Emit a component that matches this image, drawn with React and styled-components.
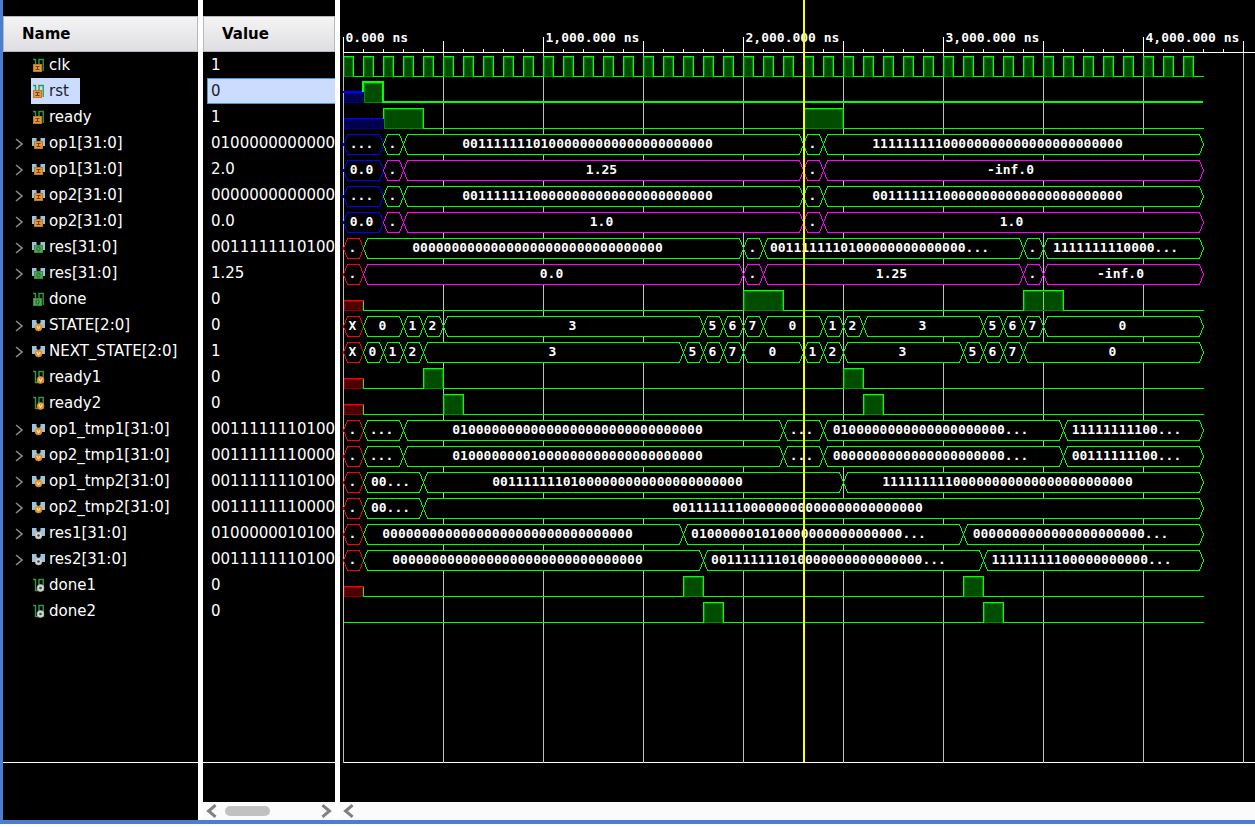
import React from "react";
import styled, { createGlobalStyle, css } from "styled-components";

const ROW = 26;
const UNIT = 20;
const END = 43;
const RULER = 52;
const GREEN = "#00ff00";
const MAGENTA = "#ff00ff";
const BLUE = "#0000ff";
const RED = "#ff0000";

const zeros = (prefix, length) => prefix.padEnd(length, "0");
const ONE_25 = "00111111101";
const ONE = "001111111";
const TWO = "01";
const NEG_INF = "111111111";

const DOT = ".";
const DOTS = "...";

const STATE = [
  ["X", 0, 1, RED], ["0", 1, 3], ["1", 3, 4], ["2", 4, 5], ["3", 5, 18],
  ["5", 18, 19], ["6", 19, 20], ["7", 20, 21], ["0", 21, 24], ["1", 24, 25],
  ["2", 25, 26], ["3", 26, 32], ["5", 32, 33], ["6", 33, 34], ["7", 34, 35],
  ["0", 35, 43],
];
const NEXT_STATE = [
  ["X", 0, 1, RED], ["0", 1, 2], ["1", 2, 3], ["2", 3, 4], ["3", 4, 17],
  ["5", 17, 18], ["6", 18, 19], ["7", 19, 20], ["0", 20, 23], ["1", 23, 24],
  ["2", 24, 25], ["3", 25, 31], ["5", 31, 32], ["6", 32, 33], ["7", 33, 34],
  ["0", 34, 43],
];

// Bus segments are [text, start, end, colour]; times are in units of 100 ns.
const signals = [
  { name: "clk", badge: "in", value: "1", clock: true },
  { name: "rst", badge: "in", value: "0", selected: true, unknown: [1, BLUE], highs: [[1, 2]] },
  { name: "ready", badge: "in", value: "1", unknown: [2, BLUE], highs: [[2, 4], [23, 25]] },
  { name: "op1[31:0]", badge: "in", value: zeros(TWO, 13), bus: [[DOTS, 0, 2, BLUE], [DOT, 2, 3], [zeros(ONE_25, 32), 3, 23], [DOT, 23, 24], [zeros(NEG_INF, 32), 24, 43]] },
  { name: "op1[31:0]", badge: "in", value: "2.0", color: MAGENTA, bus: [["0.0", 0, 2, BLUE], [DOT, 2, 3], ["1.25", 3, 23], [DOT, 23, 24], ["-inf.0", 24, 43]] },
  { name: "op2[31:0]", badge: "in", value: zeros("", 13), bus: [[DOTS, 0, 2, BLUE], [DOT, 2, 3], [zeros(ONE, 32), 3, 23], [DOT, 23, 24], [zeros(ONE, 32), 24, 43]] },
  { name: "op2[31:0]", badge: "in", value: "0.0", color: MAGENTA, bus: [["0.0", 0, 2, BLUE], [DOT, 2, 3], ["1.0", 3, 23], [DOT, 23, 24], ["1.0", 24, 43]] },
  { name: "res[31:0]", badge: "out", value: zeros(ONE_25, 13), bus: [[DOT, 0, 1, RED], [zeros("", 32), 1, 20], [DOT, 20, 21], [zeros(ONE_25, 25) + DOTS, 21, 34], [DOT, 34, 35], [zeros(NEG_INF, 13) + DOTS, 35, 43]] },
  { name: "res[31:0]", badge: "out", value: "1.25", color: MAGENTA, bus: [[DOT, 0, 1, RED], ["0.0", 1, 20], [DOT, 20, 21], ["1.25", 21, 34], [DOT, 34, 35], ["-inf.0", 35, 43]] },
  { name: "done", badge: "out", value: "0", unknown: [1, RED], highs: [[20, 22], [34, 36]] },
  { name: "STATE[2:0]", badge: "var", value: "0", bus: STATE },
  { name: "NEXT_STATE[2:0]", badge: "var", value: "1", bus: NEXT_STATE },
  { name: "ready1", badge: "var", value: "0", unknown: [1, RED], highs: [[4, 5], [25, 26]] },
  { name: "ready2", badge: "var", value: "0", unknown: [1, RED], highs: [[5, 6], [26, 27]] },
  { name: "op1_tmp1[31:0]", badge: "var", value: zeros(ONE_25, 13), bus: [[DOT, 0, 1, RED], [DOTS, 1, 3], [zeros(TWO, 32), 3, 22], [DOTS, 22, 24], [zeros(TWO, 22) + DOTS, 24, 36], [zeros(NEG_INF, 11) + DOTS, 36, 43]] },
  { name: "op2_tmp1[31:0]", badge: "var", value: zeros(ONE, 13), bus: [[DOT, 0, 1, RED], [DOTS, 1, 3], [zeros("01000000001", 32), 3, 22], [DOTS, 22, 24], [zeros("", 22) + DOTS, 24, 36], [zeros(ONE, 11) + DOTS, 36, 43]] },
  { name: "op1_tmp2[31:0]", badge: "var", value: zeros(ONE_25, 13), bus: [[DOT, 0, 1, RED], ["00...", 1, 4], [zeros(ONE_25, 32), 4, 25], [zeros(NEG_INF, 32), 25, 43]] },
  { name: "op2_tmp2[31:0]", badge: "var", value: zeros(ONE, 13), bus: [[DOT, 0, 1, RED], ["00...", 1, 4], [zeros(ONE, 32), 4, 43]] },
  { name: "res1[31:0]", badge: "net", value: zeros("01000000101", 13), bus: [[DOT, 0, 1, RED], [zeros("", 32), 1, 17], [zeros("01000000101", 27) + DOTS, 17, 31], [zeros("", 22) + DOTS, 31, 43]] },
  { name: "res2[31:0]", badge: "net", value: zeros(ONE_25, 13), bus: [[DOT, 0, 1, RED], [zeros("", 32), 1, 18], [zeros(ONE_25, 27) + DOTS, 18, 32], [zeros(NEG_INF, 20) + DOTS, 32, 43]] },
  { name: "done1", badge: "net", value: "0", unknown: [1, RED], highs: [[17, 18], [31, 32]] },
  { name: "done2", badge: "net", value: "0", highs: [[18, 19], [32, 33]] },
];

const GlobalStyle = createGlobalStyle`
  * { box-sizing: border-box; }
  body {
    margin: 0;
    background: #fff;
    font-family: "DejaVu Sans", sans-serif;
    font-size: 15px;
  }
`;

const Page = styled.div`
  display: flex;
  flex-direction: column;
  min-height: 100vh;
  padding-bottom: 3px;
`;

const Frame = styled.main`
  flex: 1;
  display: grid;
  grid-template-columns: 195px 132px minmax(0, 1fr);
  column-gap: 5px;
  border-left: 3px solid #4a7fd0;
  border-bottom: 4px solid #4a7fd0;
`;

const Pane = styled.section`
  display: flex;
  flex-direction: column;
  min-width: 0;
  overflow: hidden;
  background: #000;
  color: #fff;
`;

const PaneHeader = styled.h2`
  flex: none;
  height: 36px;
  margin: 16px 0 0;
  padding: 0 18px;
  border: 1px solid #b8b8bc;
  background: linear-gradient(#f4f4f4, #dfdfe3);
  color: #000;
  font-size: 15px;
  font-weight: 700;
  line-height: 34px;
`;

const List = styled.ul`
  flex: 1;
  margin: 0;
  padding: 0;
  list-style: none;
  border-bottom: 1px solid #fff;
`;

const Row = styled.li`
  display: flex;
  align-items: center;
  height: ${ROW}px;
  line-height: ${ROW}px;
  white-space: nowrap;
`;

const ExpandSlot = styled.span`
  flex: none;
  display: flex;
  width: 28px;
  padding: 2px 0 0 12px;
`;

const PlainButton = styled.button`
  display: flex;
  padding: 0;
  border: 0;
  background: none;
  cursor: pointer;
`;

const SignalLabel = styled.span`
  display: flex;
  align-items: center;
  gap: 4px;
  height: ${ROW}px;
  padding: 0 11px 0 0;
  ${(p) => p.$selected && css`
    background: #ccdcff;
    color: #1c1c2c;
  `}
`;

const ValueRow = styled(Row)`
  margin-left: 4px;
  padding-left: 4px;
  ${(p) => p.$selected && css`
    padding-left: 3px;
    border: 1px solid #4a9ad4;
    border-right: 0;
    background: #ccdcff;
    color: #1c1c2c;
  `}
`;

const Spare = styled.div`
  flex: none;
  height: ${(p) => p.$height}px;
`;

const ScrollBar = styled.div`
  flex: none;
  display: flex;
  align-items: center;
  gap: 8px;
  height: 18px;
  padding: 0 3px;
  background: #fbfbfb;
`;

const Thumb = styled.div`
  width: 45px;
  height: 10px;
  margin-right: auto;
  border-radius: 5px;
  background: #c1c1c1;
`;

const WaveView = styled.div`
  flex: 1;
  display: flex;
  margin-left: 3px;
  border-bottom: 1px solid #fff;
`;

const WaveChart = styled.svg`
  display: block;
  width: 100%;
  height: auto;
  min-height: 640px;
  overflow: visible;
  shape-rendering: crispEdges;
  font: 700 13px "DejaVu Sans Mono", monospace;

  text {
    fill: #fff;
    white-space: pre;
  }
`;

function Badge({ kind, x, y }) {
  if (kind === "in" || kind === "out") {
    return (
      <>
        <rect x={x - 4} y={y - 3} width="8" height="7" fill={kind === "in" ? "#f7941d" : "#4cae50"} stroke={kind === "in" ? "#b87a3c" : "#3a8a44"} />
        {kind === "in" ? (
          <path d={`M${x - 2} ${y - 1}h4M${x} ${y - 1}v3M${x - 2} ${y + 2}h4`} stroke="#4d4d4d" fill="none" />
        ) : (
          <rect x={x - 1.5} y={y - 1.5} width="3" height="4" rx="1" stroke="#27602c" fill="none" />
        )}
      </>
    );
  }
  if (kind === "var") {
    return (
      <>
        <circle cx={x} cy={y} r="3.4" fill="#f7941d" stroke="#d98a35" strokeWidth="0.8" />
        <path d={`M${x - 1.5} ${y - 1.5}l1.5 3l1.5 -3`} stroke="#fff" fill="none" />
      </>
    );
  }
  return (
    <>
      <circle cx={x} cy={y} r="3.4" fill="#d8d8d8" stroke="#b4b4b4" strokeWidth="0.8" />
      <circle cx={x} cy={y} r="1.3" fill="#444" />
    </>
  );
}

function SignalIcon({ bus, badge }) {
  const square = badge === "in" || badge === "out";
  return (
    <svg width="14" height="14" viewBox="0 0 14 14" aria-hidden="true">
      {bus ? (
        <>
          <path d="M1 2h4.500v2.500l1.500 1.500h1l1.500 -1.500v-2.500h4.500v8h-4l-2 -1h-1l-2 1h-4z" fill="#9cc3d8" />
          <Badge kind={badge} x={7.5} y={square ? 8.5 : 9.5} />
        </>
      ) : (
        <>
          <path d="M2 1.500h2.500v11h3.500v-11h4.200v11.500" fill="none" stroke="#2f9a48" strokeWidth="1.400" />
          <Badge kind={badge} x={square ? 6.5 : 9.5} y={square ? 9.5 : 10} />
        </>
      )}
    </svg>
  );
}

function Chevron({ left, size = 12, stroke = 1.6, color = "#8c8c8c" }) {
  return (
    <svg width={Math.round(size * 0.75)} height={size} viewBox="0 0 9 12" aria-hidden="true">
      <path d={left ? "M8 1L2 6l6 5" : "M1 1l6 5l-6 5"} fill="none" stroke={color} strokeWidth={stroke} />
    </svg>
  );
}

const X = (t) => t * UNIT;

function Pulse({ from, to, top, bottom, color, edge }) {
  return (
    <rect x={from + 1} y={top + 1} width={to - from - 2} height={bottom - top - 1} fill={color} fillOpacity="0.3" stroke={edge} />
  );
}

function ScalarLane({ signal, y }) {
  const low = y + 24;
  const high = y + 4;
  const weight = signal.selected ? 2 : 1;
  // A two-pixel stroke has to sit on whole pixels to stay sharp.
  const snap = signal.selected ? "translate(-0.5 -0.5)" : undefined;
  const highs = signal.clock
    ? Array.from({ length: END }, (_, i) => [i, i + 0.5])
    : signal.highs;
  const [unknownEnd, unknownColor] = signal.unknown || [0, GREEN];
  const mid = y + 14;
  const startsHigh = highs[0][0] === unknownEnd;
  let d = unknownEnd ? `M${X(unknownEnd)} ${mid}V${startsHigh ? high : low}` : `M0 ${startsHigh ? high : low}`;
  highs.forEach(([a, b]) => {
    d += `${startsHigh && a === highs[0][0] ? "" : `H${X(a)}V${high}`}H${X(b)}V${low}`;
  });
  d += `H${X(END)}`;
  return (
    <g>
      {unknownEnd > 0 && (
        <>
          <Pulse from={0} to={X(unknownEnd)} top={mid} bottom={low} color={unknownColor} edge={unknownColor === RED ? "#900000" : "#000090"} />
          <path d={`M0 ${mid}H${X(unknownEnd)}`} stroke={unknownColor} strokeWidth={weight} transform={snap} />
        </>
      )}
      {highs.map(([a, b]) => (
        <Pulse key={a} from={X(a)} to={X(b)} top={high} bottom={low} color={GREEN} edge="#008c00" />
      ))}
      <path d={d} fill="none" stroke={GREEN} strokeWidth={weight} transform={snap} />
    </g>
  );
}

function BusLane({ signal, y }) {
  return (
    <g>
      {signal.bus.map(([label, from, to, color]) => {
        const a = X(from);
        const b = X(to);
        return (
          <g key={from}>
            <path
              d={`M${a} ${y + 14}l4 -10H${b - 4}l4 10l-4 10H${a + 4}z`}
              fill="#000"
              stroke={color || signal.color || GREEN}
            />
            <text x={(a + b) / 2 - Math.round(label.length / 2)} y={y + 17} textAnchor="middle">{label}</text>
          </g>
        );
      })}
    </g>
  );
}

function Waveform() {
  const ticks = Array.from({ length: 50 }, (_, i) => i);
  return (
    <WaveView>
      <WaveChart role="img" aria-label="Signal waveforms">
        <g transform="translate(0.5 0.5)">
          {ticks.filter((t) => t % 5 === 0).map((t) => (
            <line key={t} x1={X(t)} x2={X(t)} y1={RULER} y2="100%" stroke="#c0c0c0" />
          ))}
          {ticks.map((t) => (
            <line key={t} x1={X(t)} x2={X(t)} y1={t % 10 === 0 ? 36 : t % 5 === 0 ? 40 : 48} y2={RULER} stroke="#fff" />
          ))}
          <line x1="0" x2="100%" y1={RULER} y2={RULER} stroke="#fff" />
          {ticks.filter((t) => t % 10 === 0).map((t) => (
            <text key={t} x={X(t) + 2} y="41">{`${(t * 100).toLocaleString("en-US")}${t ? "" : ""}.000 ns`}</text>
          ))}
          {signals.map((signal, i) => {
            const Lane = signal.bus ? BusLane : ScalarLane;
            return <Lane key={i} signal={signal} y={RULER + i * ROW} />;
          })}
        </g>
        <rect x={X(23)} y="0" width="2" height="100%" fill="#ffff00" />
      </WaveChart>
    </WaveView>
  );
}

export default function App() {
  return (
    <Page>
      <GlobalStyle />
      <Frame>
        <Pane>
          <PaneHeader>Name</PaneHeader>
          <List>
            {signals.map((s, i) => (
              <Row key={i}>
                <ExpandSlot>
                  {s.bus && (
                    <PlainButton aria-label={`Expand ${s.name}`}>
                      <Chevron />
                    </PlainButton>
                  )}
                </ExpandSlot>
                <SignalLabel $selected={s.selected}>
                  <SignalIcon bus={Boolean(s.bus)} badge={s.badge} />
                  {s.name}
                </SignalLabel>
              </Row>
            ))}
          </List>
          <Spare $height={57} />
        </Pane>
        <Pane>
          <PaneHeader>Value</PaneHeader>
          <List>
            {signals.map((s, i) => (
              <ValueRow key={i} $selected={s.selected}>{s.value}</ValueRow>
            ))}
          </List>
          <Spare $height={39} />
          <ScrollBar>
            <PlainButton aria-label="Scroll left"><Chevron left size={14} stroke={2.6} color="#808080" /></PlainButton>
            <Thumb />
            <PlainButton aria-label="Scroll right"><Chevron size={14} stroke={2.6} color="#808080" /></PlainButton>
          </ScrollBar>
        </Pane>
        <Pane>
          <Waveform />
          <Spare $height={39} />
          <ScrollBar>
            <PlainButton aria-label="Scroll left"><Chevron left size={14} stroke={2.6} color="#808080" /></PlainButton>
          </ScrollBar>
        </Pane>
      </Frame>
    </Page>
  );
}
